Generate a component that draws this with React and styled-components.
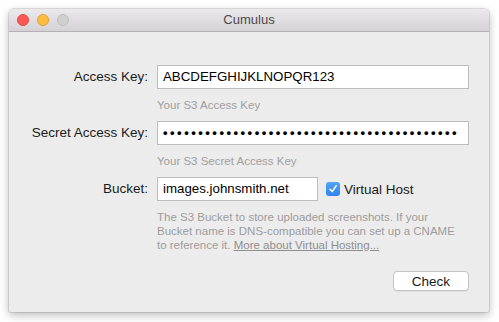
import styled, { createGlobalStyle } from "styled-components";

const GlobalStyle = createGlobalStyle`
  html, body {
    margin: 0;
    padding: 0;
    background: #ffffff;
  }
  body {
    font-family: "Liberation Sans", Arial, sans-serif;
  }
`

const Page = styled.div`
  width: 499px;
  height: 322px;
  padding: 9px 10px 10px 9px;
  box-sizing: border-box;
`

const Window = styled.div`
  width: 480px;
  height: 303px;
  background: #ececec;
  border-radius: 5px 5px 2px 2px;
  box-shadow: 0 3px 10px rgba(0, 0, 0, 0.28), 0 0 0 1px rgba(0, 0, 0, 0.1);
  display: flex;
  flex-direction: column;
  overflow: hidden;
`

const TitleBar = styled.div`
  height: 22px;
  flex: 0 0 22px;
  background: linear-gradient(#ebe9eb, #d4d2d4);
  border-bottom: 1px solid #b3b1b3;
  display: flex;
  align-items: center;
  position: relative;
  padding-left: 8px;
  gap: 8px;
`

const Light = styled.div`
  width: 12px;
  height: 12px;
  border-radius: 50%;
  box-sizing: border-box;
  background: ${(p) => p.color};
  border: 1px solid ${(p) => p.edge};
`

const Title = styled.div`
  position: absolute;
  left: 0;
  right: 0;
  top: 0;
  line-height: 22px;
  text-align: center;
  font-size: 13px;
  color: #4b4b4b;
  pointer-events: none;
`

const Form = styled.div`
  display: grid;
  grid-template-columns: 139px 312px;
  column-gap: 9px;
  padding-top: 33px;
  align-items: center;
`

const Label = styled.div`
  text-align: right;
  font-size: 13.5px;
  color: #1a1a1a;
  height: 24px;
  line-height: 24px;
  white-space: nowrap;
`

const Field = styled.div`
  height: 24px;
  box-sizing: border-box;
  background: #fff;
  border: 1px solid #bdbdbd;
  font-size: 13.3px;
  color: #000;
  line-height: 22px;
  padding: 0 5px;
  width: ${(p) => p.width || "312px"};
  white-space: nowrap;
  overflow: hidden;
`

const Dots = styled.span`
  font-size: 13px;
  letter-spacing: 2.5px;
  font-weight: bold;
`

const Hint = styled.div`
  grid-column: 2;
  font-size: 11.5px;
  line-height: 14px;
  color: #a0a0a0;
  padding: 9px 0 9px;
`

const Inline = styled.div`
  display: flex;
  align-items: center;
  gap: 8px;
`

const CheckLabel = styled.label`
  display: flex;
  align-items: center;
  gap: 4px;
  font-size: 13.5px;
  color: #1a1a1a;
`

const Box = styled.span`
  width: 14px;
  height: 14px;
  border-radius: 3px;
  background: linear-gradient(#55a2fa, #2f84f2);
  display: inline-flex;
  align-items: center;
  justify-content: center;
`

const Description = styled(Hint)`
  padding: 9px 0 0;
  color: #9c9c9c;
  white-space: nowrap;
`

const Link = styled.a`
  color: #8e8e8e;
  text-decoration: underline;
`

const Footer = styled.div`
  grid-column: 2;
  display: flex;
  justify-content: flex-end;
  padding-top: 19px;
`

const Button = styled.button`
  width: 76px;
  height: 20px;
  background: #fff;
  border: 1px solid #c3c3c3;
  border-radius: 4px;
  font-family: "Liberation Sans", Arial, sans-serif;
  font-size: 13.5px;
  color: #1a1a1a;
  padding: 0;
  box-shadow: 0 1px 0 rgba(0, 0, 0, 0.05);
`

const App = () => {
  return (
    <>
      <GlobalStyle />
      <Page>
        <Window>
          <TitleBar>
            <Light color="#fc5753" edge="#df4744" />
            <Light color="#fdbc40" edge="#de9f34" />
            <Light color="#d0d0d0" edge="#bcbcbc" />
            <Title>Cumulus</Title>
          </TitleBar>
          <Form>
            <Label>Access Key:</Label>
            <Field>ABCDEFGHIJKLNOPQR123</Field>
            <Hint>Your S3 Access Key</Hint>

            <Label>Secret Access Key:</Label>
            <Field>
              <Dots>{"•".repeat(42)}</Dots>
            </Field>
            <Hint>Your S3 Secret Access Key</Hint>

            <Label>Bucket:</Label>
            <Inline>
              <Field width="161px">images.johnsmith.net</Field>
              <CheckLabel>
                <Box>
                  <svg width="10" height="10" viewBox="0 0 10 10">
                    <path d="M2 5.2 L4.2 7.6 L8.2 1.8" fill="none" stroke="#fff" strokeWidth="1.5" strokeLinecap="round" strokeLinejoin="round" />
                  </svg>
                </Box>
                Virtual Host
              </CheckLabel>
            </Inline>
            <Description>
              The S3 Bucket to store uploaded screenshots. If your<br />
              Bucket name is DNS-compatible you can set up a CNAME<br />
              to reference it. <Link>More about Virtual Hosting...</Link>
            </Description>

            <Footer>
              <Button>Check</Button>
            </Footer>
          </Form>
        </Window>
      </Page>
    </>
  )
}

export default App;
